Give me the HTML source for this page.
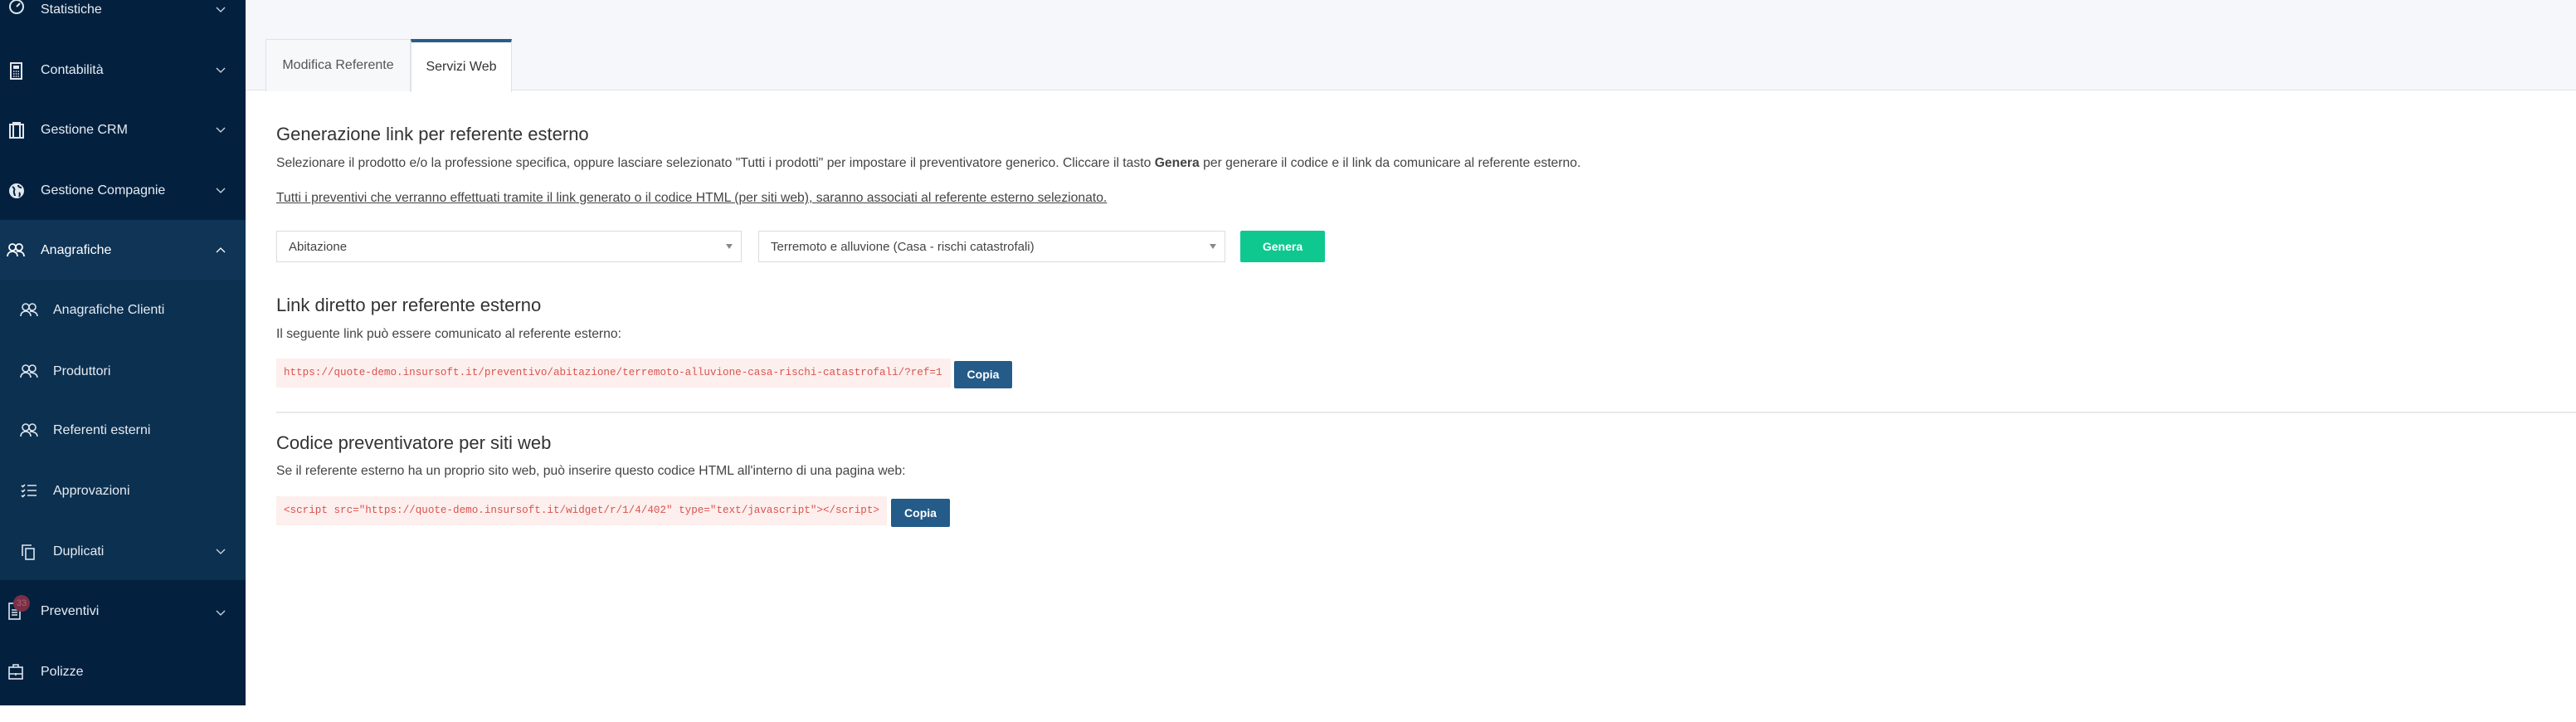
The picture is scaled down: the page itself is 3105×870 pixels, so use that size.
<!DOCTYPE html>
<html><head><meta charset="utf-8"><style>
*{box-sizing:border-box;margin:0;padding:0}
body{width:3105px;height:850px;overflow:hidden;font-family:"Liberation Sans",sans-serif;background:#fff;position:relative}
.sb{position:absolute;left:0;top:0;width:296px;height:850px;background:#03213f}
.sec{position:absolute;left:0;width:296px;background:#0d3252}
.it{position:absolute;left:0;width:296px;height:72px;color:#e6ecf2;font-size:16px;line-height:20px}
.it .t{position:absolute;left:49px;top:2px}
.it.sub .t{left:64px}
.it svg.i{position:absolute;left:10px;top:2px}
.it.sub svg.i{left:24px}
.chev{position:absolute;left:260px;top:4px}
.main{position:absolute;left:296px;top:0;right:0;height:109px;background:#f5f7fa;border-bottom:1px solid #dfe3e8}
.tab{position:absolute;top:47px;height:63px;border:1px solid #dde2e8;border-bottom:none;font-size:16px;color:#555;line-height:62px;text-align:center}
h2{position:absolute;left:333px;font-size:22px;font-weight:normal;color:#333;line-height:28px}
p{position:absolute;left:333px;font-size:15.7px;color:#444;line-height:20px;white-space:nowrap}
.sel{position:absolute;top:278px;height:38px;border:1px solid #dcdcdc;background:#fff;font-size:15px;color:#444;line-height:38px;padding-left:14px}
.sel:after{content:"";position:absolute;right:10px;top:15px;border-left:4px solid transparent;border-right:4px solid transparent;border-top:6px solid #888}
.code{position:absolute;left:333px;height:35px;background:#fdefed;color:#d9534f;font-family:"Liberation Mono",monospace;font-size:12.6px;line-height:35px;padding-left:9px;white-space:nowrap}
.btn{position:absolute;color:#fff;font-weight:bold;font-size:14px;text-align:center;border-radius:2px}
</style></head><body>
<div class="sb">
<div class="sec" style="top:265px;height:72px;background:#0f3456"></div>
<div class="sec" style="top:337px;height:362px;background:#0c3050"></div>
<div class="it" style="top:0"><svg class="i" width="20" height="20" viewBox="0 0 20 20" style="top:-2px"><circle cx="10" cy="10" r="8" fill="none" stroke="#dfe6ee" stroke-width="2"/><path d="M10 10l4-4" stroke="#dfe6ee" stroke-width="2"/></svg><span class="t">Statistiche</span><svg class="chev" width="12" height="8" viewBox="0 0 12 8" style="top:8px"><path d="M1 1l5 5 5-5" fill="none" stroke="#cfd8e2" stroke-width="1.3"/></svg></div>
<div class="it" style="top:73px"><svg class="i" width="20" height="22" viewBox="0 0 20 22"><rect x="3" y="1" width="13" height="19" fill="none" stroke="#dfe6ee" stroke-width="2"/><rect x="6" y="4" width="7" height="4" fill="#dfe6ee"/><path d="M6 11h7M6 14h7M6 17h7" stroke="#dfe6ee" stroke-width="1.5" stroke-dasharray="1.5 1.3"/></svg><span class="t">Contabilità</span><svg class="chev" width="12" height="8" viewBox="0 0 12 8" style="top:8px"><path d="M1 1l5 5 5-5" fill="none" stroke="#cfd8e2" stroke-width="1.3"/></svg></div>
<div class="it" style="top:145px"><svg class="i" width="20" height="20" viewBox="0 0 20 20"><rect x="2" y="3" width="16" height="16" fill="none" stroke="#dfe6ee" stroke-width="2"/><path d="M6 3V1h8v2M6 3v16M14 3v16" stroke="#dfe6ee" stroke-width="2" fill="none"/></svg><span class="t">Gestione CRM</span><svg class="chev" width="12" height="8" viewBox="0 0 12 8" style="top:8px"><path d="M1 1l5 5 5-5" fill="none" stroke="#cfd8e2" stroke-width="1.3"/></svg></div>
<div class="it" style="top:218px"><svg class="i" width="20" height="20" viewBox="0 0 20 20"><circle cx="10" cy="10" r="9" fill="#dfe6ee"/><path d="M5 5c2 1 3 3 2 5s1 4 1 6M12 3c0 2 2 3 4 3M13 12c1 1 1 3 0 5" stroke="#03213f" stroke-width="2" fill="none"/></svg><span class="t">Gestione Compagnie</span><svg class="chev" width="12" height="8" viewBox="0 0 12 8" style="top:8px"><path d="M1 1l5 5 5-5" fill="none" stroke="#cfd8e2" stroke-width="1.3"/></svg></div>
<div class="it" style="top:290px"><svg class="i" width="22" height="18" viewBox="0 0 22 18" style="left:8px"><circle cx="7" cy="6" r="4" fill="none" stroke="#fff" stroke-width="1.8"/><circle cx="15" cy="6" r="4" fill="none" stroke="#fff" stroke-width="1.8"/><path d="M1 17c0-4 3-6 6-6s6 2 6 6M12 11c1-.3 2-.3 3 0 3 0 6 2 6 6" fill="none" stroke="#fff" stroke-width="1.8"/></svg><span class="t" style="color:#fff">Anagrafiche</span><svg class="chev" width="12" height="8" viewBox="0 0 12 8" style="top:7px"><path d="M1 7l5-5 5 5" fill="none" stroke="#fff" stroke-width="1.3"/></svg></div>
<div class="it sub" style="top:362px"><svg class="i" width="22" height="18" viewBox="0 0 22 18"><circle cx="7" cy="6" r="4" fill="none" stroke="#dfe6ee" stroke-width="1.6"/><circle cx="15" cy="6" r="4" fill="none" stroke="#dfe6ee" stroke-width="1.6"/><path d="M1 17c0-4 3-6 6-6s6 2 6 6M12 11c3 0 9 1 9 6" fill="none" stroke="#dfe6ee" stroke-width="1.6"/></svg><span class="t">Anagrafiche Clienti</span></div>
<div class="it sub" style="top:436px"><svg class="i" width="22" height="18" viewBox="0 0 22 18"><circle cx="7" cy="6" r="4" fill="none" stroke="#dfe6ee" stroke-width="1.6"/><circle cx="15" cy="6" r="4" fill="none" stroke="#dfe6ee" stroke-width="1.6"/><path d="M1 17c0-4 3-6 6-6s6 2 6 6M12 11c3 0 9 1 9 6" fill="none" stroke="#dfe6ee" stroke-width="1.6"/></svg><span class="t">Produttori</span></div>
<div class="it sub" style="top:507px"><svg class="i" width="22" height="18" viewBox="0 0 22 18"><circle cx="7" cy="6" r="4" fill="none" stroke="#dfe6ee" stroke-width="1.6"/><circle cx="15" cy="6" r="4" fill="none" stroke="#dfe6ee" stroke-width="1.6"/><path d="M1 17c0-4 3-6 6-6s6 2 6 6M12 11c3 0 9 1 9 6" fill="none" stroke="#dfe6ee" stroke-width="1.6"/></svg><span class="t">Referenti esterni</span></div>
<div class="it sub" style="top:580px"><svg class="i" width="22" height="18" viewBox="0 0 22 18"><path d="M2 3l1.5 1.5L6 2M2 9l1.5 1.5L6 8M2 15l1.5 1.5L6 14M9 3h11M9 9h11M9 15h11" fill="none" stroke="#dfe6ee" stroke-width="1.6"/></svg><span class="t">Approvazioni</span></div>
<div class="it sub" style="top:653px"><svg class="i" width="20" height="20" viewBox="0 0 20 20"><path d="M3 15V2h11" fill="none" stroke="#dfe6ee" stroke-width="1.6"/><rect x="7" y="6" width="10" height="13" fill="none" stroke="#dfe6ee" stroke-width="1.6"/></svg><span class="t">Duplicati</span><svg class="chev" width="12" height="8" viewBox="0 0 12 8" style="top:8px"><path d="M1 1l5 5 5-5" fill="none" stroke="#cfd8e2" stroke-width="1.3"/></svg></div>
<div class="it" style="top:725px"><svg class="i" width="16" height="22" viewBox="0 0 16 22" style="top:1px"><rect x="1" y="1" width="13" height="19" fill="none" stroke="#dfe6ee" stroke-width="1.6"/><path d="M4 9h7M4 12h7M4 15h7" stroke="#dfe6ee" stroke-width="1.4"/></svg><div style="position:absolute;left:16px;top:-8px;width:20px;height:20px;border-radius:50%;background:#7a2f45;color:#b0607a;font-size:11px;line-height:20px;text-align:center">33</div><span class="t">Preventivi</span><svg class="chev" width="12" height="8" viewBox="0 0 12 8" style="top:10px"><path d="M1 1l5 5 5-5" fill="none" stroke="#cfd8e2" stroke-width="1.3"/></svg></div>
<div class="it" style="top:798px"><svg class="i" width="20" height="20" viewBox="0 0 20 20"><rect x="1" y="4" width="16" height="14" fill="none" stroke="#dfe6ee" stroke-width="1.6"/><path d="M6 4V1h6v3M1 12h16M9 11v3" stroke="#dfe6ee" stroke-width="1.6" fill="none"/></svg><span class="t">Polizze</span></div>
</div>
<div class="main"></div>
<div class="tab" style="left:320px;width:175px;background:#f7f8fa">Modifica Referente</div>
<div class="tab" style="left:495px;width:122px;background:#fff;border-top:4px solid #2b5b87;height:64px;color:#333;line-height:60px">Servizi Web</div>
<h2 style="top:148px">Generazione link per referente esterno</h2>
<p style="top:187px">Selezionare il prodotto e/o la professione specifica, oppure lasciare selezionato "Tutti i prodotti" per impostare il preventivatore generico. Cliccare il tasto <b>Genera</b> per generare il codice e il link da comunicare al referente esterno.</p>
<p style="top:229px;text-decoration:underline">Tutti i preventivi che verranno effettuati tramite il link generato o il codice HTML (per siti web), saranno associati al referente esterno selezionato.</p>
<div class="sel" style="left:333px;width:561px">Abitazione</div>
<div class="sel" style="left:914px;width:563px">Terremoto e alluvione (Casa - rischi catastrofali)</div>
<div class="btn" style="left:1495px;top:278px;width:102px;height:38px;line-height:38px;background:#0ec88f">Genera</div>
<h2 style="top:354px">Link diretto per referente esterno</h2>
<p style="top:393px">Il seguente link può essere comunicato al referente esterno:</p>
<div class="code" style="top:432px;width:813px">https://quote-demo.insursoft.it/preventivo/abitazione/terremoto-alluvione-casa-rischi-catastrofali/?ref=1</div>
<div class="btn" style="left:1150px;top:435px;width:70px;height:33px;line-height:33px;background:#245b88">Copia</div>
<div style="position:absolute;left:333px;right:0;top:496px;height:2px;background:#e8eaed"></div>
<h2 style="top:520px">Codice preventivatore per siti web</h2>
<p style="top:558px">Se il referente esterno ha un proprio sito web, può inserire questo codice HTML all'interno di una pagina web:</p>
<div class="code" style="top:598px;width:736px">&lt;script src="https://quote-demo.insursoft.it/widget/r/1/4/402" type="text/javascript"&gt;&lt;/script&gt;</div>
<div class="btn" style="left:1074px;top:601px;width:71px;height:34px;line-height:34px;background:#245b88">Copia</div>
</body></html>
